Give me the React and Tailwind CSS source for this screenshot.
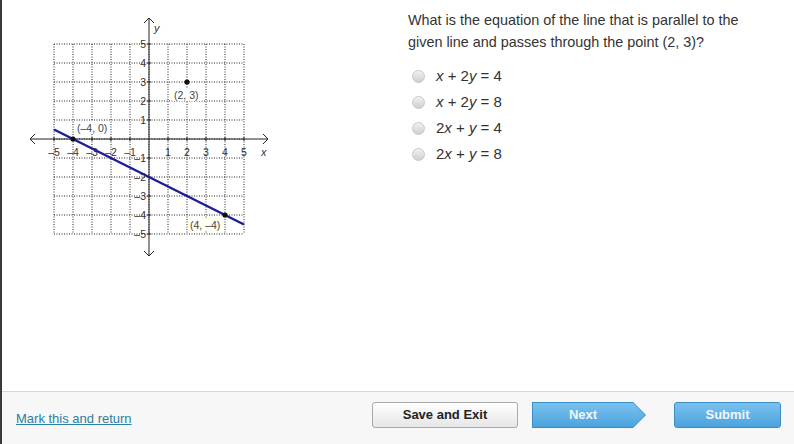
import React from "react";

// graph geometry, in page pixels
const X0 = 149;
const Y0 = 139;
const U = 19;
const px = (x) => X0 + x * U;
const py = (y) => Y0 - y * U;

const ticks = [-5, -4, -3, -2, -1, 1, 2, 3, 4, 5];

const Graph = () => (
  <svg width="250" height="260" viewBox="30 10 250 260" className="shrink-0">
    {/* dotted grid */}
    {[-5, -4, -3, -2, -1, 0, 1, 2, 3, 4, 5].map((i) => (
      <g key={i} stroke="#222" strokeWidth="1" strokeDasharray="1 1.5">
        <line x1={px(i)} y1={py(5)} x2={px(i)} y2={py(-5)} />
        <line x1={px(-5)} y1={py(i)} x2={px(5)} y2={py(i)} />
      </g>
    ))}

    {/* axes */}
    <g stroke="#222" strokeWidth="1" fill="none">
      <line x1="30" y1={Y0} x2="268" y2={Y0} />
      <line x1={X0} y1="18" x2={X0} y2="256" />
      <polyline points={`35,${Y0 - 5} 30,${Y0} 35,${Y0 + 5}`} />
      <polyline points={`263,${Y0 - 5} 268,${Y0} 263,${Y0 + 5}`} />
      <polyline points={`${X0 - 5},23 ${X0},18 ${X0 + 5},23`} />
      <polyline points={`${X0 - 5},251 ${X0},256 ${X0 + 5},251`} />
      {ticks.map((t) => (
        <g key={t}>
          <line x1={px(t)} y1={Y0 - 2} x2={px(t)} y2={Y0 + 2} />
          <line x1={X0 - 2} y1={py(t)} x2={X0 + 2} y2={py(t)} />
        </g>
      ))}
    </g>

    {/* tick labels */}
    <g fontFamily="Liberation Sans, Arial, sans-serif" fontSize="10.5" fill="#333">
      {ticks.map((t) => (
        <text key={"x" + t} x={px(t)} y={Y0 + 17} textAnchor="middle">
          {t < 0 ? "\u2013" + -t : t}
        </text>
      ))}
      {ticks.map((t) => (
        <text key={"y" + t} x={X0 - 3} y={py(t) + 4} textAnchor="end">
          {t < 0 ? "\u2013" + -t : t}
        </text>
      ))}
      <text x="154" y="32" fontStyle="italic" fontSize="11">y</text>
      <text x="261" y="156" fontStyle="italic" fontSize="11">x</text>
    </g>

    {/* given line */}
    <line x1={px(-5)} y1={py(0.5)} x2={px(5)} y2={py(-4.5)} stroke="#1d1d9c" strokeWidth="2.4" />

    {/* point labels */}
    <g fontFamily="Liberation Sans, Arial, sans-serif" fontSize="10.5" fill="#444">
      <rect x="172" y="88" width="30" height="13" fill="#fff" />
      <text x="174" y="99">(2, 3)</text>
      <rect x="75" y="121" width="35" height="13" fill="#fff" />
      <text x="77" y="132">(–4, 0)</text>
      <rect x="188" y="218" width="36" height="13" fill="#fffff4" />
      <text x="190" y="229">(4, –4)</text>
    </g>

    {/* points */}
    <g fill="#111">
      <circle cx={px(2)} cy={py(3)} r="2.6" />
      <circle cx={px(-4)} cy={py(0)} r="2.6" />
      <circle cx={px(4)} cy={py(-4)} r="2.6" />
    </g>
  </svg>
);

const options = [
  [<i key="a">x</i>, " + 2", <i key="b">y</i>, " = 4"],
  [<i key="a">x</i>, " + 2", <i key="b">y</i>, " = 8"],
  ["2", <i key="a">x</i>, " + ", <i key="b">y</i>, " = 4"],
  ["2", <i key="a">x</i>, " + ", <i key="b">y</i>, " = 8"],
];

const Radio = () => (
  <span className="w-[13px] h-[13px] rounded-full border border-[#c8c8c8] bg-gradient-to-b from-[#f2f2f2] to-[#cfcfcf] shrink-0" />
);

export default function App() {
  return (
    <div className="w-[794px] h-[444px] bg-white border-l-2 border-[#3a3a3a] flex flex-col overflow-hidden font-['Liberation_Sans',Arial,sans-serif] text-[#333]">
      <div className="h-[391px] flex">
        <div className="ml-[28px] mt-[10px]">
          <Graph />
        </div>

        <div className="ml-[128px] pt-[9px]">
          <p className="text-[14.4px] leading-[22px] w-[340px]">
            What is the equation of the line that is parallel to the given line and passes through the point (2, 3)?
          </p>
          <ul className="mt-[10px]">
            {options.map((opt, i) => (
              <li key={i} className="h-[26px] flex items-center">
                <span className="ml-[4px] flex items-center">
                  <Radio />
                </span>
                <span className="ml-[11px] text-[15px]">{opt}</span>
              </li>
            ))}
          </ul>
        </div>
      </div>

      {/* footer bar */}
      <div className="h-[53px] border-t border-[#d6d6d6] bg-[#f7f7f7] flex items-start pt-[10px]">
        <a href="#" className="ml-[14px] mt-[4px] leading-[26px] text-[13px] text-[#2a7fa2] underline">
          Mark this and return
        </a>
        <div className="ml-auto mr-[13px] flex items-start">
          <button className="w-[146px] h-[26px] rounded-[3px] border border-[#a9a9a9] bg-gradient-to-b from-white to-[#e6e6e6] text-[13px] font-bold text-[#222]">
            Save and Exit
          </button>
          <div className="ml-[14px] w-[114px] h-[26px] p-px bg-[#3b8cc7] [clip-path:polygon(0_0,101px_0,114px_13px,101px_26px,0_26px)]">
            <div className="w-full h-full bg-gradient-to-b from-[#79c2ee] to-[#4aa3de] [clip-path:polygon(0_0,100px_0,112px_12px,100px_24px,0_24px)] flex items-center">
              <span className="w-[100px] text-center text-[13px] font-bold text-[#eef7fd]">Next</span>
            </div>
          </div>
          <button className="ml-[28px] w-[107px] h-[26px] rounded-[3px] border border-[#3b8cc7] bg-gradient-to-b from-[#79c2ee] to-[#4aa3de] text-[13px] font-bold text-[#eef7fd]">
            Submit
          </button>
        </div>
      </div>
    </div>
  );
}
